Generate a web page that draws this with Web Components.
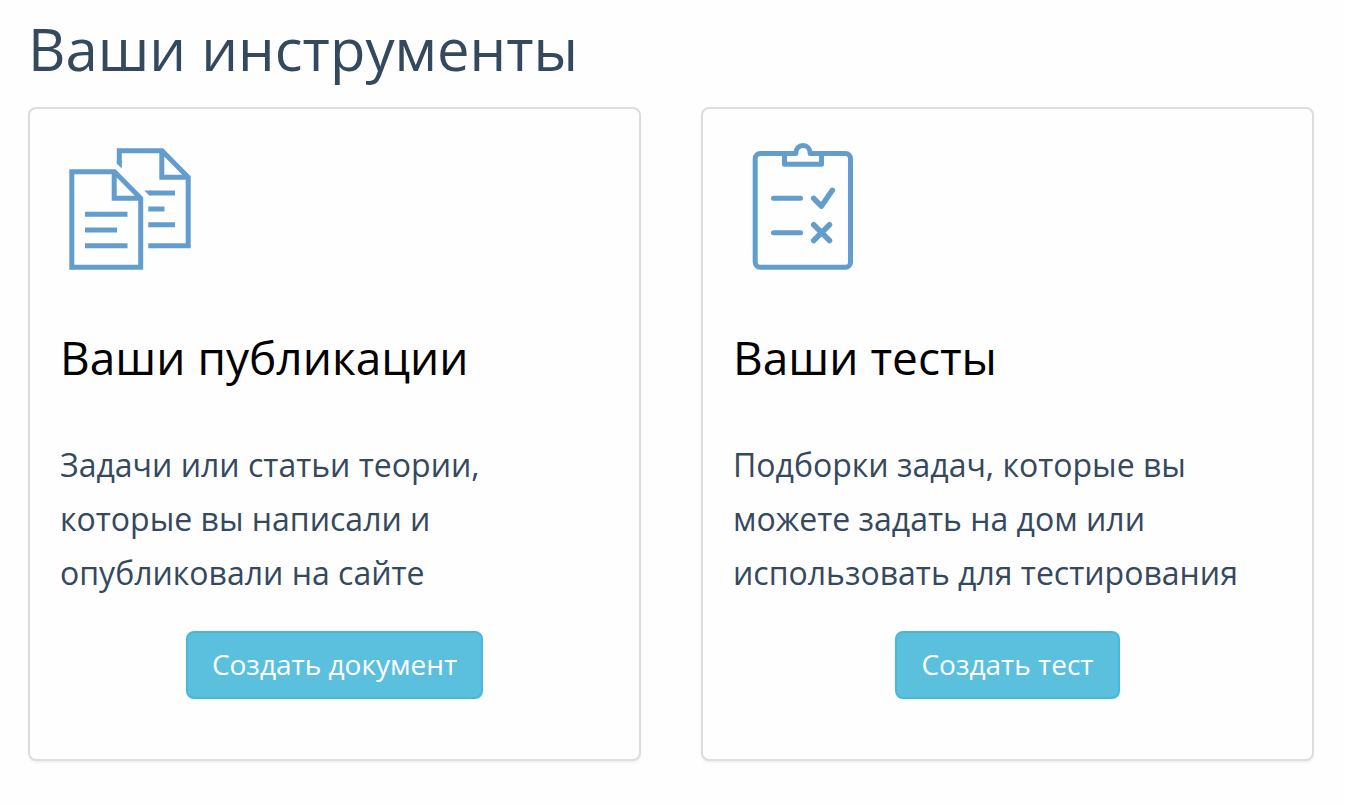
<!DOCTYPE html>
<html lang="ru">
<head>
<meta charset="utf-8">
<meta name="viewport" content="width=device-width, initial-scale=1">
<title>Ваши инструменты</title>
<style>
  body { margin: 0; background: #fefefe; color: #34495e; font-family: "Open Sans", "Noto Sans", sans-serif; }
</style>
</head>
<body>
<tools-page>
  <span slot="title">Ваши инструменты</span>
  <tool-card>
    <documents-icon slot="icon"></documents-icon>
    <span slot="heading">Ваши публикации</span>
    Задачи или статьи теории, которые вы написали и опубликовали на сайте
    <action-button slot="action">Создать документ</action-button>
  </tool-card>
  <tool-card>
    <checklist-icon slot="icon"></checklist-icon>
    <span slot="heading">Ваши тесты</span>
    Подборки задач, которые вы можете задать на дом или использовать для тестирования
    <action-button slot="action">Создать тест</action-button>
  </tool-card>
</tools-page>

<script>
const define = (name, html) => customElements.define(name, class extends HTMLElement {
  constructor() {
    super();
    this.attachShadow({ mode: "open" }).innerHTML = html;
  }
});

define("tools-page", `
  <style>
    :host { display: block; padding: 15px 31px 44px 28px; }
    h1 { margin: 0 0 25px; font-size: 58px; line-height: 67px; font-weight: 400; }
    .grid { display: grid; grid-template-columns: repeat(2, minmax(0, 1fr)); gap: 60px; }
    @media (max-width: 900px) { .grid { grid-template-columns: 1fr; } }
  </style>
  <main>
    <h1><slot name="title"></slot></h1>
    <div class="grid"><slot></slot></div>
  </main>`);

define("tool-card", `
  <style>
    :host {
      display: block; box-sizing: border-box; padding: 30px 30px 60px;
      border: 2px solid #ddd; border-radius: 8px; background: #fefefe;
      box-shadow: 0 2px 2px rgba(0, 0, 0, .05);
    }
    h2 { margin: 50px 0 53px; color: #000; font-size: 46px; line-height: 56px; font-weight: 400; }
    p { margin: 0 0 31px; font-size: 32px; line-height: 54px; }
    .action { display: flex; justify-content: center; }
  </style>
  <slot name="icon"></slot>
  <h2><slot name="heading"></slot></h2>
  <p><slot></slot></p>
  <div class="action"><slot name="action"></slot></div>`);

define("action-button", `
  <style>
    :host { display: block; }
    button {
      display: block; margin: 0; padding: 11px 24px 13px;
      border: 2px solid #46b8da; border-radius: 8px;
      background: #5bc0de; color: #fff; cursor: pointer;
      font-family: inherit; font-size: 28px; line-height: 40px;
    }
    button:hover { background: #31b0d5; }
  </style>
  <button type="button"><slot></slot></button>`);

const iconStyle = `
  <style>
    :host { display: block; width: 140px; height: 140px; }
    svg { display: block; width: 100%; height: 100%; fill: none; stroke: #629dcd; stroke-width: 5; }
  </style>`;

define("documents-icon", iconStyle + `
  <svg viewBox="0 0 140 140" aria-hidden="true">
    <path d="M11.8 32.8H54.5L80.7 59.3V128.2H11.8Z M54.2 32.8V59.3H80.7"/>
    <path d="M25 75.3H67.5 M25 91H57 M25 106.7H67.5"/>
    <path d="M88.3 106.7H128.2V38.2L102 11.8H59.3V24 M101.8 11.8V38.2H128.2"/>
    <path d="M90 54H115 M88.3 70H104.5 M88.3 85.7H115"/>
    <path fill="#629dcd" stroke="none" d="M56.8 22H61.8V29.4L56.8 24.7Z M84.2 51.5H91V56.5H89.3Z"/>
  </svg>`);

define("checklist-icon", iconStyle + `
  <svg viewBox="0 0 140 140" aria-hidden="true" stroke-linecap="round" stroke-linejoin="round">
    <path d="M62.8 14.6H27.2A5 5 0 0 0 22.2 19.6V123.2A5 5 0 0 0 27.2 128.2H112.5A5 5 0 0 0 117.5 123.2V19.6A5 5 0 0 0 112.5 14.6H77.2C77.2 9.5 74 6.4 70 6.4S62.8 9.5 62.8 14.6"/>
    <path d="M51.5 14.6V25.2H88.5V14.6"/>
    <path d="M40.5 59.3H67.5 M40.5 93.7H67.5"/>
    <path stroke-width="5.5" d="M80.7 59.3L88.3 67.2L99.3 51.3 M80.7 85.7L96.5 101.5 M96.5 85.7L80.7 101.5"/>
  </svg>`);
</script>
</body>
</html>
